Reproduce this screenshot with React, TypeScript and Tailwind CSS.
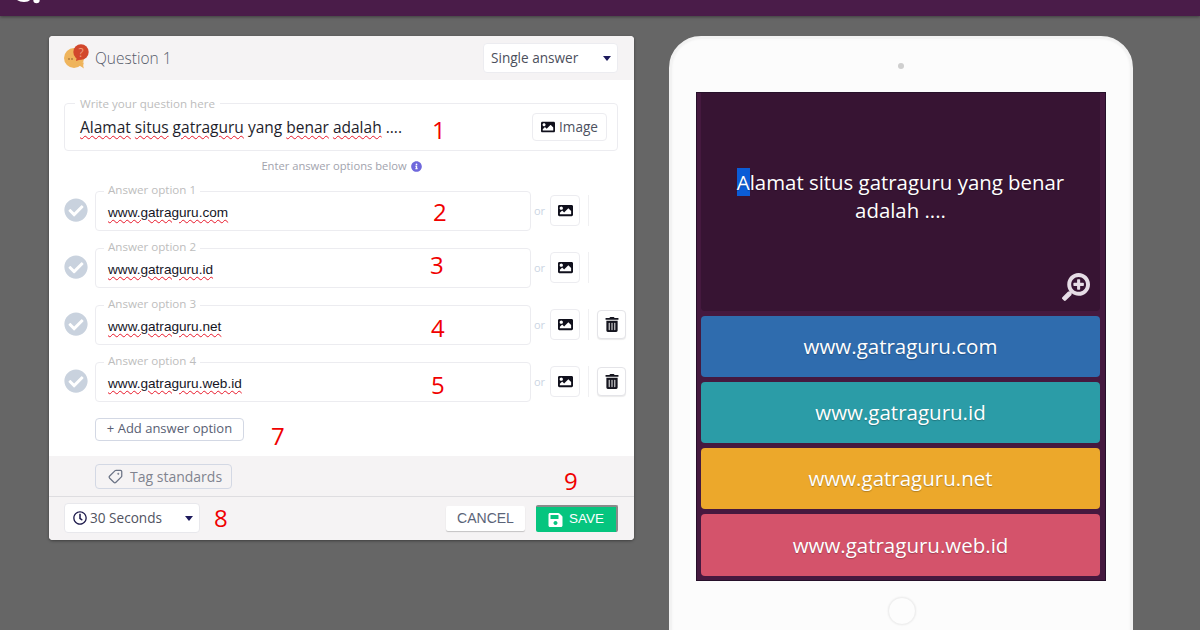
import React from "react";
import { FaCheckCircle, FaImage, FaInfoCircle, FaRegClock, FaSave, FaSearchPlus, FaTrashAlt } from "react-icons/fa";
import { LuTag } from "react-icons/lu";

const OPEN = "font-['Open_Sans',sans-serif]";
const ARIAL = "font-['Liberation_Sans',Arial,sans-serif]";
const WAVY = "underline decoration-wavy decoration-[#e8182a] decoration-1 underline-offset-[2px]";
const SHADOW = "[text-shadow:0_1px_1px_rgba(0,0,0,0.25)]";

function Caret() {
  return <span className="h-0 w-0 border-x-[4px] border-t-[5px] border-x-transparent border-t-[#1d1a5c]" />;
}

function Note({ n, className }: { n: string; className: string }) {
  return <span className={`absolute text-[24px] leading-none text-[#f00000] ${OPEN} ${className}`}>{n}</span>;
}

function OptionRow({ label, value, canDelete, mark, markClass }: { label: string; value: string; canDelete: boolean; mark: string; markClass: string }) {
  return (
    <div className="flex h-[40px] items-start pl-[15px]">
      <FaCheckCircle className="mt-[7px] h-[24px] w-[24px] shrink-0 text-[#c9d2de]" />
      <div className="relative ml-[7px] h-[40px] w-[436px] shrink-0 rounded-[4px] border border-[#ececf0] pl-[12px] pt-[11px]">
        <span className={`absolute -top-[10px] left-[8px] bg-white px-[4px] text-[11.6px] leading-[16px] text-[#bdbdbd] ${OPEN}`}>{label}</span>
        <span className={`relative -top-[4px] text-[13.6px] leading-[18px] text-[#15151f] ${ARIAL} ${WAVY}`}>{value}</span>
        <Note n={mark} className={markClass} />
      </div>
      <span className={`ml-[3px] mt-[13px] w-[16px] text-[11px] leading-[14px] text-[#cbd5e3] ${OPEN}`}>or</span>
      <button className="flex mt-[4px] h-[31px] w-[30px] shrink-0 items-center justify-center rounded-[4px] border border-[#ececf0] bg-white">
        <FaImage className="h-[15px] w-[15px] text-[#10101c]" />
      </button>
      <div className="ml-[8px] mt-[4px] h-[31px] w-px shrink-0 bg-[#f0f0f2]" />
      {canDelete && (
        <button className="ml-[8px] mt-[5px] flex h-[29px] w-[29px] shrink-0 items-center justify-center rounded-[4px] border border-[#e4e4e8] bg-white shadow-[0_1px_1px_rgba(0,0,0,0.08)]">
          <FaTrashAlt className="h-[15px] w-[14px] text-[#15151f]" />
        </button>
      )}
    </div>
  );
}

function Answer({ text, className }: { text: string; className: string }) {
  return (
    <div className={`flex items-center justify-center rounded-[4px] text-[20.5px] text-white ${OPEN} ${SHADOW} ${className}`}>{text}</div>
  );
}

export default function App() {
  return (
    <div className="h-[630px] w-[1200px] overflow-hidden bg-[#666666]">
      <header className="h-[16px] overflow-hidden bg-[#4a1c49] pl-[15px] shadow-[0_1px_3px_rgba(0,0,0,0.4)]">
        <svg width="30" height="5" viewBox="0 0 30 5" fill="white" className="block"><path d="M2 0h13c-1 1-3 2-6 2S4 1 2 0z" /><circle cx="21.5" cy="0" r="3.2" /></svg>
      </header>
      <main className="flex items-start pl-[49px] pt-[20px]">
        <section className="relative h-[504px] w-[585px] shrink-0 overflow-hidden rounded-[4px] bg-white shadow-[0_1px_3px_rgba(0,0,0,0.4)]">
          <div className="flex h-[44px] items-center bg-[#f5f3f4] pl-[15px] pr-[16px]">
            <svg width="25" height="25" viewBox="0 0 25 25" className="-mt-[3px] shrink-0">
              <circle cx="10" cy="14" r="10" fill="#efb45c" />
              <path d="M13 20l7 4.500c-1-2-1-4 0-6z" fill="#efb45c" />
              <circle cx="17" cy="8" r="7.700" fill="#d2472c" />
              <path d="M12 17l1-5 5 3z" fill="#d2472c" />
              <text x="17" y="12.500" fontSize="12" fill="#ee9a7c" textAnchor="middle" fontFamily="Open Sans">?</text>
              <circle cx="5" cy="15" r="0.8" fill="#85582a" /><circle cx="8" cy="15" r="0.8" fill="#85582a" />
            </svg>
            <span className={`ml-[6px] mt-[1px] text-[15.5px] font-light text-[#565b6a] ${OPEN}`}>Question 1</span>
            <div className="ml-auto flex h-[30px] w-[135px] items-center justify-between rounded-[4px] border border-[#ececf0] bg-white pl-[7px] pr-[6px]">
              <span className={`text-[13.6px] text-[#4c4f5c] ${OPEN}`}>Single answer</span>
              <Caret />
            </div>
          </div>

          <div className="h-[376px] pt-[23px]">
            <div className="relative ml-[15px] mr-[16px] flex h-[48px] items-center justify-between rounded-[4px] border border-[#ececf0] pl-[15px] pr-[10px]">
              <span className={`absolute -top-[8px] left-[10px] bg-white px-[5px] text-[11.6px] leading-[15px] text-[#bdbdbd] ${OPEN}`}>Write your question here</span>
              <span className={`mt-[1px] text-[15.5px] text-[#1d1d2b] ${OPEN}`}><span className={WAVY}>Alamat</span> <span className={WAVY}>situs</span> <span className={WAVY}>gatraguru</span> yang <span className={WAVY}>benar</span> <span className={WAVY}>adalah</span> ....</span>
              <Note n="1" className="left-[367px] top-[14px]" />
              <button className={`flex h-[28px] w-[75px] items-center justify-center gap-[4px] rounded-[4px] border border-[#ececf0] text-[13.6px] text-[#4d5160] ${OPEN}`}>
                <FaImage className="h-[14px] w-[14px] text-[#10101c]" />Image
              </button>
            </div>
            <div className={`mt-[7px] flex h-[17px] items-center justify-center gap-[4px] text-[11.2px] text-[#a2a3ad] ${OPEN}`}>
              Enter answer options below
              <FaInfoCircle className="h-[11px] w-[11px] text-[#6f68dc]" />
            </div>
            <div className="mt-[16px] flex flex-col gap-[17px]">
              <OptionRow label="Answer option 1" value="www.gatraguru.com" canDelete={false} mark="2" markClass="left-[337px] top-[8px]" />
              <OptionRow label="Answer option 2" value="www.gatraguru.id" canDelete={false} mark="3" markClass="left-[334px] top-[4px]" />
              <OptionRow label="Answer option 3" value="www.gatraguru.net" canDelete={true} mark="4" markClass="left-[335px] top-[10px]" />
              <OptionRow label="Answer option 4" value="www.gatraguru.web.id" canDelete={true} mark="5" markClass="left-[335px] top-[10px]" />
            </div>
            <div className="relative ml-[46px] mt-[16px] flex h-[23px] w-[149px] items-center justify-center rounded-[4px] border border-[#d3d8e4]">
              <span className={`-mt-[1px] text-[13px] text-[#596073] ${OPEN}`}>+ Add answer option</span>
              <Note n="7" className="left-[175px] top-[5px]" />
            </div>
          </div>

          <div className="h-[41px] border-b border-[#dedde0] bg-[#f5f3f4] pl-[46px] pt-[8px]">
            <div className="flex h-[25px] w-[137px] items-center rounded-[4px] border border-[#d3d8e4] pl-[12px]">
              <LuTag className="h-[15px] w-[15px] -scale-x-100 text-[#6b7385]" />
              <span className={`ml-[7px] text-[14px] text-[#80838f] ${OPEN}`}>Tag standards</span>
            </div>
          </div>

          <div className="relative flex h-[43px] items-center bg-[#f5f3f4] pl-[15px] pr-[16px]">
            <div className="-mt-[1px] flex h-[30px] w-[136px] items-center rounded-[4px] border border-[#e8e8ec] bg-white pl-[8px] pr-[6px]">
              <FaRegClock className="h-[14px] w-[14px] text-[#1d1a4c]" />
              <span className={`ml-[3px] mt-[1px] text-[13.6px] text-[#51535f] ${OPEN}`}>30 Seconds</span>
              <span className="ml-auto flex"><Caret /></span>
            </div>
            <Note n="8" className="left-[165px] top-[9px]" />
            <Note n="9" className="left-[515px] -top-[28px]" />
            <button className={`ml-auto h-[25px] w-[79px] rounded-[2px] bg-white text-[14px] text-[#5b6478] shadow-[0_1px_1px_rgba(0,0,0,0.2)] ${ARIAL}`}>CANCEL</button>
            <button className={`ml-[11px] flex h-[27px] w-[82px] items-center justify-center gap-[6px] rounded-[2px] border-r-2 border-t-2 border-[#8a8a8a] bg-[#06c57f] text-[13.5px] text-white ${ARIAL}`}>
              <FaSave className="h-[16px] w-[15px]" />SAVE
            </button>
          </div>
        </section>

        <section className="relative ml-[35px] flex h-[640px] w-[464px] shrink-0 flex-col items-center rounded-[32px] border-2 border-[#f2f2f2] bg-[#fcfcfc] shadow-[inset_0_0_3px_rgba(0,0,0,0.1)]">
          <div className="mt-[25px] h-[6px] w-[6px] rounded-full bg-[#cfcfcf]" />
          <div className="mt-[23px] flex h-[489px] w-[410px] flex-col gap-[5px] border border-[#26102a] bg-[#45193f] pb-[4px] pl-[4px] pr-[5px]">
            <div className="relative flex h-[218px] shrink-0 items-center justify-center rounded-b-[4px] bg-[#371433] px-[30px]">
              <p className={`-mt-[13px] text-center text-[20.4px] leading-[28px] text-white ${OPEN} ${SHADOW}`}>
                <span className="bg-[#0b5cd6]">A</span>lamat situs gatraguru yang benar adalah ....
              </p>
              <FaSearchPlus className="absolute bottom-[10px] right-[10px] h-[28px] w-[28px] -scale-x-100 text-[#e6dde6]" />
            </div>
            <Answer text="www.gatraguru.com" className="h-[61px] bg-[#2f6cae]" />
            <Answer text="www.gatraguru.id" className="h-[61px] bg-[#2b9ca7]" />
            <Answer text="www.gatraguru.net" className="h-[61px] bg-[#eca82b]" />
            <Answer text="www.gatraguru.web.id" className="h-[62px] bg-[#d4536b]" />
          </div>
          <div className="ml-[1px] mt-[16px] h-[28px] w-[28px] rounded-full border border-[#efefef] bg-[#fdfdfd] shadow-[0_0_2px_rgba(0,0,0,0.08)]" />
        </section>
      </main>
    </div>
  );
}
